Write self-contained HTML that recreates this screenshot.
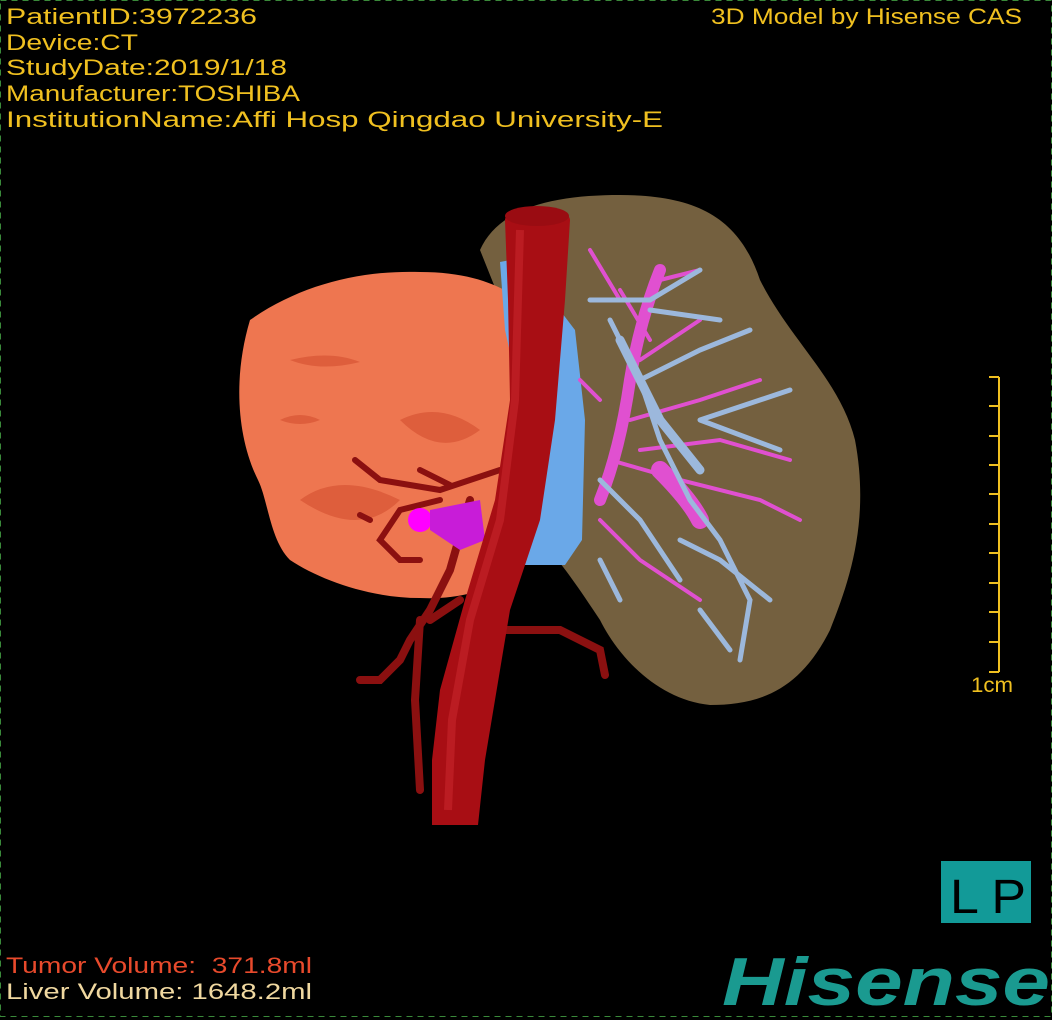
<!DOCTYPE html>
<html><head><meta charset="utf-8"><style>
html,body{margin:0;padding:0;background:#000;width:1052px;height:1020px;overflow:hidden}
svg{display:block}
</style></head><body>
<svg width="1052" height="1020" viewBox="0 0 1052 1020" xmlns="http://www.w3.org/2000/svg">
<rect width="1052" height="1020" fill="#000"/>
<rect x="0.5" y="0.5" width="1051" height="1016" fill="none" stroke="#3a8a3a" stroke-dasharray="6,5"/>
<!-- liver -->
<path d="M480,250 C500,205 560,195 620,195 C700,195 740,220 760,280 C790,340 840,380 855,440 C870,520 850,580 830,630 C800,690 760,705 710,705 C660,700 620,660 600,620 C580,590 560,560 540,540 L500,300 Z" fill="#74603f"/>
<!-- tumor -->
<path d="M250,320 C300,285 360,270 420,272 C470,272 500,285 520,300 L525,560 C500,590 460,600 420,598 C370,598 320,580 290,560 C270,540 268,500 258,480 C238,440 232,380 250,320 Z" fill="#ee7650"/>
<path d="M290,360 Q330,350 360,362 Q320,372 290,360Z M280,420 Q300,410 320,420 Q300,428 280,420Z M400,420 Q440,400 480,430 Q440,460 400,420Z M300,500 Q340,470 400,500 Q360,540 300,500Z" fill="#de5e3c"/>
<!-- blue vein -->
<path d="M500,262 L520,258 L575,330 L585,420 L582,540 L565,565 L520,565 L525,420 L505,330 Z" fill="#6aa8e8"/>
<!-- magenta branches -->
<g stroke="#e050d0" fill="none" stroke-linecap="round">
<path d="M600,500 Q620,450 630,380 Q640,320 660,270" stroke-width="12"/>
<path d="M630,420 L700,400 L760,380 M640,360 L700,320 M620,300 L590,250 M660,280 L700,270 M610,460 L680,480 L760,500 L800,520 M600,520 L640,560 L700,600 M640,450 L720,440 L790,460 M650,340 L620,290 M600,400 L580,380" stroke-width="4"/>
<path d="M660,470 Q690,500 700,520" stroke-width="18"/>
</g>
<!-- light blue branches -->
<g stroke="#9cb8dc" fill="none" stroke-linecap="round">
<path d="M590,300 L650,300 L700,270 M610,320 L640,380 L660,440 L690,500 L720,540 L750,600 L740,660 M640,380 L700,350 L750,330 M700,420 L760,400 L790,390 M700,420 L780,450 M600,480 L640,520 L680,580 M680,540 L720,560 L770,600 M600,560 L620,600 M700,610 L730,650 M650,310 L720,320" stroke-width="5"/>
<path d="M620,340 L660,420 L700,470" stroke-width="9"/>
</g>
<!-- small red arteries left -->
<g stroke="#8b1010" fill="none" stroke-linecap="round">
<path d="M500,470 L440,490 L380,480 L355,460 M450,485 L420,470 M440,500 L400,510 L380,540 L400,560 L420,560 M370,520 L360,515" stroke-width="6"/>
<path d="M470,500 L450,570 L430,610 L410,640 L400,660 L380,680 L360,680 M420,620 L415,700 L420,790 M500,630 L560,630 L600,650 L605,675 M460,600 L430,620" stroke-width="8"/>
</g>
<circle cx="420" cy="520" r="12" fill="#ff00ff"/>
<path d="M430,510 L480,500 L485,540 L460,550 L430,530Z" fill="#c81cd8"/>
<!-- aorta -->
<path d="M505,220 C505,205 570,205 570,220 L565,300 L555,420 L540,520 L510,610 L495,700 L485,760 L478,825 L432,825 L432,760 L440,690 L465,600 L495,500 L510,400 L508,300 Z" fill="#a80e14"/>
<path d="M520,230 L515,400 L500,520 L470,620 L452,720 L448,810" stroke="#bb1c22" stroke-width="8" fill="none"/>
<ellipse cx="537" cy="216" rx="32" ry="10" fill="#9a0c12"/>
<!-- scale bar -->
<g stroke="#f0c020" stroke-width="2">
<line x1="999" y1="377" x2="999" y2="672"/>
<line x1="989" y1="377" x2="999" y2="377"/><line x1="989" y1="406" x2="999" y2="406"/><line x1="989" y1="436" x2="999" y2="436"/><line x1="989" y1="465" x2="999" y2="465"/><line x1="989" y1="494" x2="999" y2="494"/><line x1="989" y1="524" x2="999" y2="524"/><line x1="989" y1="553" x2="999" y2="553"/><line x1="989" y1="583" x2="999" y2="583"/><line x1="989" y1="612" x2="999" y2="612"/><line x1="989" y1="642" x2="999" y2="642"/><line x1="989" y1="672" x2="999" y2="672"/>
</g>
<text x="971" y="692" font-family="Liberation Sans, sans-serif" font-size="21" fill="#f0c020" textLength="42" lengthAdjust="spacingAndGlyphs">1cm</text>
<!-- text -->
<g font-family="Liberation Sans, sans-serif" font-size="22" fill="#f0c020">
<text x="6" y="24" textLength="251" lengthAdjust="spacingAndGlyphs">PatientID:3972236</text>
<text x="6" y="50" textLength="132" lengthAdjust="spacingAndGlyphs">Device:CT</text>
<text x="6" y="75" textLength="281" lengthAdjust="spacingAndGlyphs">StudyDate:2019/1/18</text>
<text x="6" y="101" textLength="294" lengthAdjust="spacingAndGlyphs">Manufacturer:TOSHIBA</text>
<text x="6" y="127" textLength="657" lengthAdjust="spacingAndGlyphs">InstitutionName:Affi Hosp Qingdao University-E</text>
<text x="711" y="24" textLength="311" lengthAdjust="spacingAndGlyphs">3D Model by Hisense CAS</text>
<text x="6" y="973" fill="#e84a2c" textLength="306" lengthAdjust="spacingAndGlyphs">Tumor Volume:&#160;&#160;371.8ml</text>
<text x="6" y="999" fill="#f0d8a0" textLength="306" lengthAdjust="spacingAndGlyphs">Liver Volume: 1648.2ml</text>
</g>
<!-- LP -->
<rect x="941" y="861" width="90" height="62" fill="#129a98"/>
<text x="950" y="913" font-family="Liberation Sans, sans-serif" font-size="48" fill="#000" textLength="76" lengthAdjust="spacingAndGlyphs">L P</text>
<!-- Hisense -->
<text x="722" y="1005" font-family="Liberation Sans, sans-serif" font-weight="bold" font-style="italic" font-size="68" fill="#1a9a90" textLength="328" lengthAdjust="spacingAndGlyphs">Hisense</text>
</svg>
</body></html>
